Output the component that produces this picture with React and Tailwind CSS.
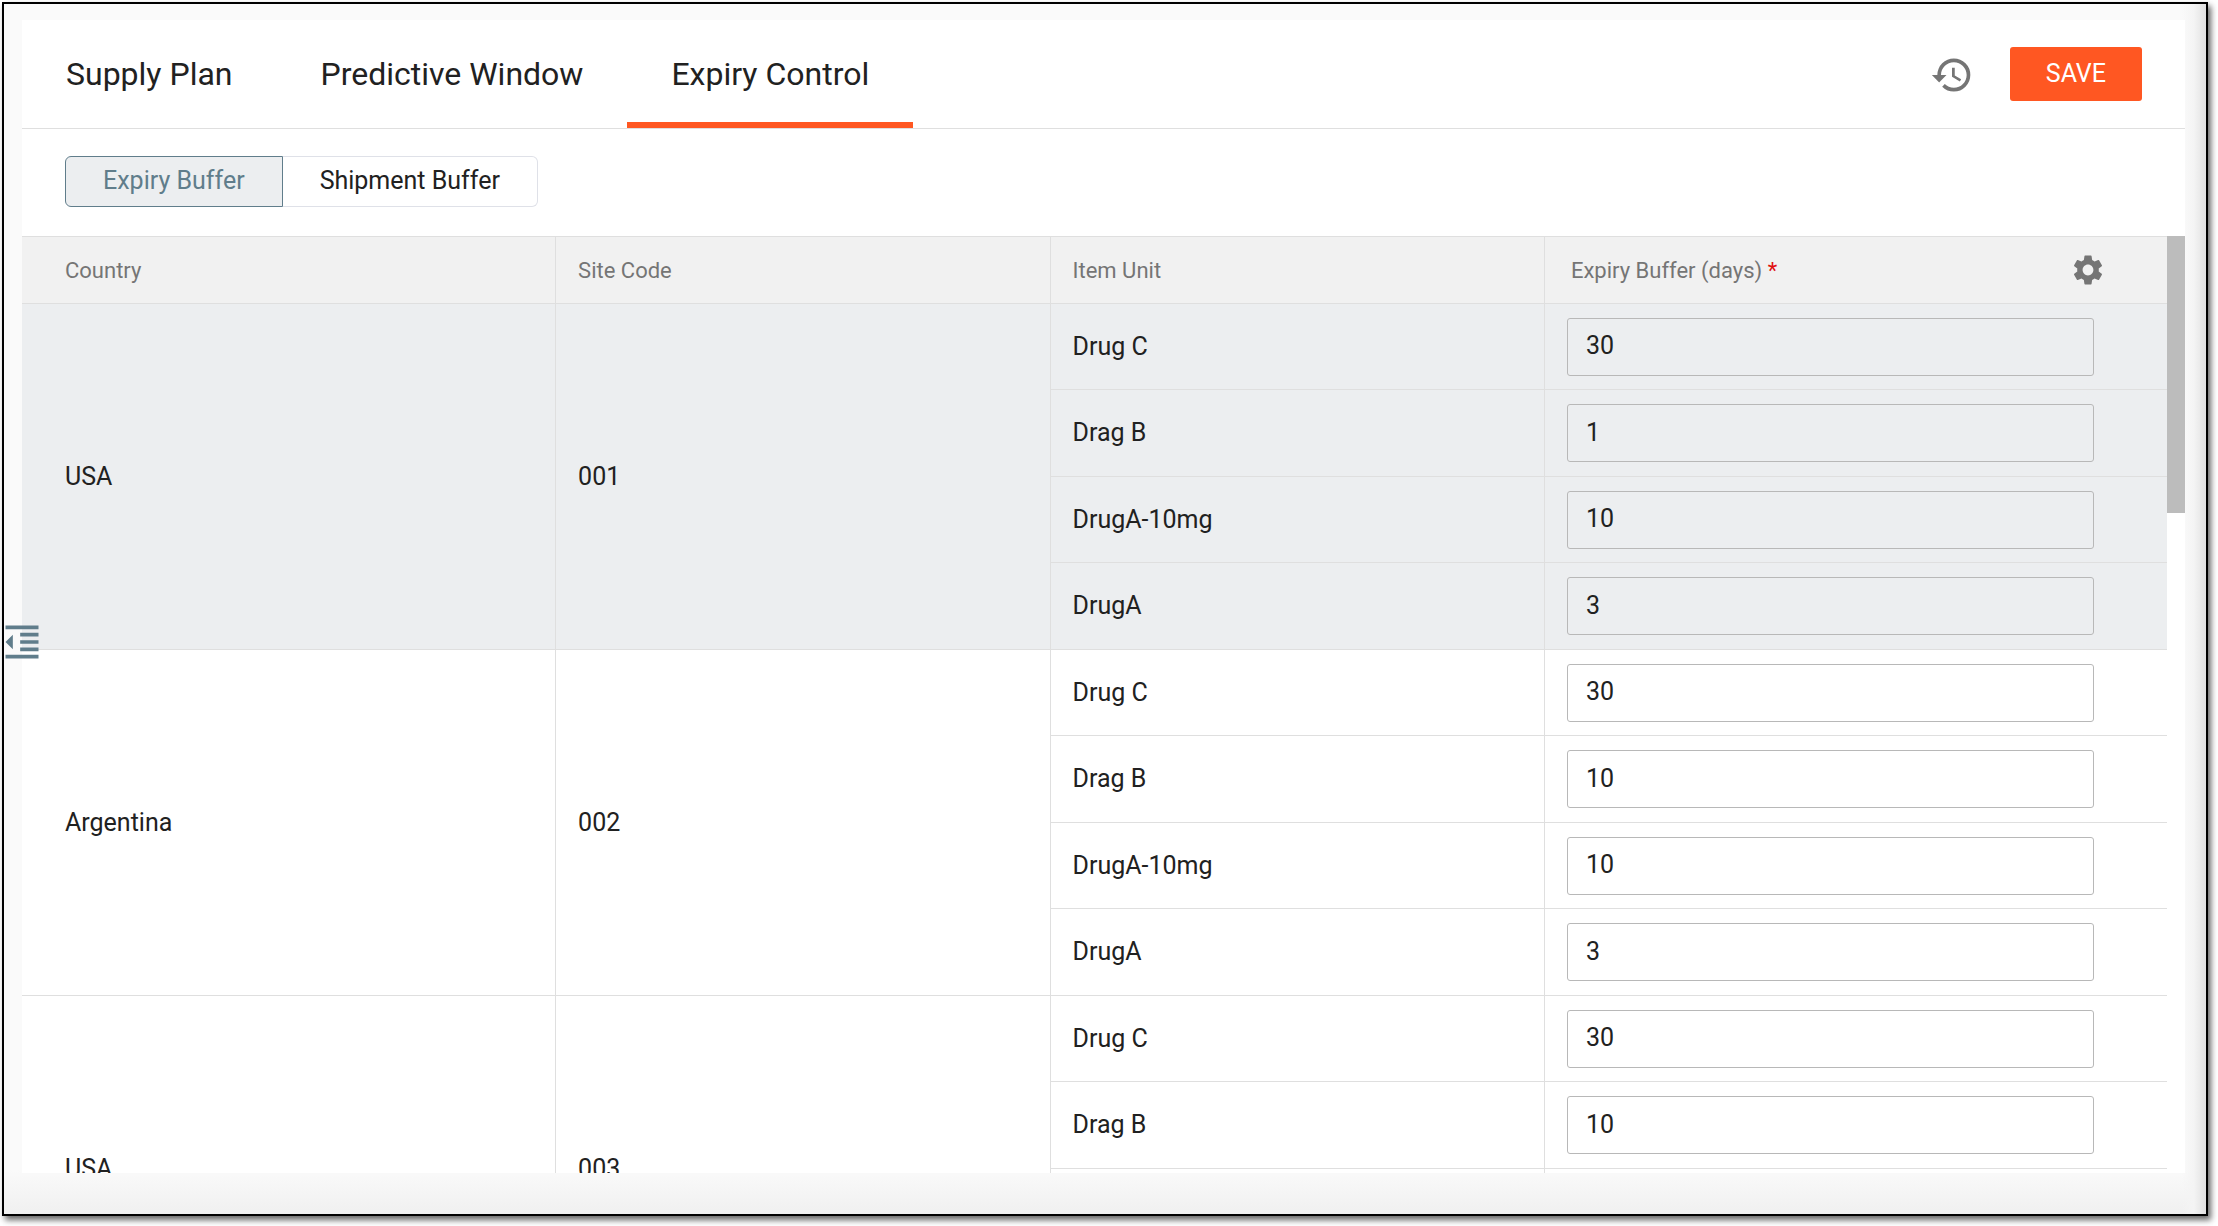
import React, { useState } from 'react';
import { MdHistory, MdSettings, MdFormatIndentDecrease } from 'react-icons/md';
import clsx from 'clsx';

const TABS = ['Supply Plan', 'Predictive Window', 'Expiry Control'];
const BUFFERS = ['Expiry Buffer', 'Shipment Buffer'];

const SITES = [
  {
    country: 'USA',
    code: '001',
    items: [['Drug C', 30], ['Drag B', 1], ['DrugA-10mg', 10], ['DrugA', 3]],
  },
  {
    country: 'Argentina',
    code: '002',
    items: [['Drug C', 30], ['Drag B', 10], ['DrugA-10mg', 10], ['DrugA', 3]],
  },
  {
    country: 'USA',
    code: '003',
    items: [['Drug C', 30], ['Drag B', 10], ['DrugA-10mg', 10], ['DrugA', 3]],
  },
];

const Header = () => {
  const [tab, setTab] = useState('Expiry Control');

  return (
    <header className="flex items-center justify-between border-b border-[#dfdfdf] pr-[43px]">
      <nav className="flex">
        {TABS.map((name) => (
          <button
            key={name}
            type="button"
            onClick={() => setTab(name)}
            className={clsx(
              'h-[108px] px-11 pt-1.5 border-b-6 text-[32px] leading-10',
              tab === name ? 'border-[#ff5722]' : 'border-transparent'
            )}
          >
            {name}
          </button>
        ))}
      </nav>
      <div className="flex items-center gap-9">
        <button type="button" aria-label="History" className="pt-0.5 text-[#757575]">
          <MdHistory size={44} />
        </button>
        <button type="button" className="h-[54px] px-9 rounded-[3px] bg-[#ff5722] text-white text-[25px]">
          SAVE
        </button>
      </div>
    </header>
  );
};

const BufferToggle = () => {
  const [buffer, setBuffer] = useState('Expiry Buffer');

  return (
    <div className="flex px-[43px] pt-[27px] pb-[29px]">
      {BUFFERS.map((name) => (
        <button
          key={name}
          type="button"
          onClick={() => setBuffer(name)}
          className={clsx(
            'h-[51px] px-[37px] pb-0.5 border text-[25px] leading-8 first:rounded-l-md last:rounded-r-md',
            buffer === name ? 'border-[#607d8b] bg-[#eceef0] text-[#607d8b]' : 'border-[#dfe1e8] border-l-0'
          )}
        >
          {name}
        </button>
      ))}
    </div>
  );
};

const BufferTable = () => (
  <table className="flex-1 table-fixed border-separate border-spacing-0 text-[25px]">
    <colgroup>
      <col className="w-[24.9%]" />
      <col className="w-[23.05%]" />
      <col className="w-[23.05%]" />
      <col className="w-[29%]" />
    </colgroup>
    <thead>
      <tr className="h-[68px] bg-[#f1f1f1] text-left text-[22px] text-[#757575] *:border-y *:border-[#dfdfdf] *:font-normal">
        <th className="border-r pl-[43px]">Country</th>
        <th className="border-r pl-[22px]">Site Code</th>
        <th className="border-r pl-[22px]">Item Unit</th>
        <th className="pl-[26px] pr-[61px]">
          <div className="flex items-center justify-between">
            <span>
              Expiry Buffer (days) <span className="text-[#e01010]">*</span>
            </span>
            <button type="button" aria-label="Settings">
              <MdSettings size={36} />
            </button>
          </div>
        </th>
      </tr>
    </thead>
    {SITES.map((site, index) => (
      <tbody key={site.code} className={index === 0 ? 'bg-[#eceef0]' : 'bg-white'}>
        {site.items.map(([item, days], i) => (
          <tr key={item} className="h-[86px] even:h-[87px] *:border-b *:border-[#dfdfdf]">
            {i === 0 && (
              <>
                <td rowSpan={site.items.length} className="border-r pl-[43px]">{site.country}</td>
                <td rowSpan={site.items.length} className="border-r pl-[22px]">{site.code}</td>
              </>
            )}
            <td className="border-r pl-[22px]">{item}</td>
            <td className="pl-[22px] pr-[73px]">
              <input
                type="text"
                defaultValue={days}
                aria-label={`Expiry buffer for ${item}, site ${site.code}`}
                className="block w-full h-[58px] px-[18px] pb-0.5 border border-[#b8b8b8] rounded-[3px] bg-transparent"
              />
            </td>
          </tr>
        ))}
      </tbody>
    ))}
  </table>
);

const App = () => (
  <div className="h-screen pt-0.5 pl-0.5 pr-2.5 pb-2.5 bg-white font-[Roboto,sans-serif] text-[#212121]">
    <div className="relative flex h-full border-2 border-black bg-[#fafafa] bg-[linear-gradient(to_left,#e0e0e0,#f4f4f4_12px,transparent_24px),linear-gradient(to_top,#f0f0f0,transparent_44px)] pt-4 pl-[18px] pr-[21px] pb-[41px] shadow-[3px_4px_6px_rgba(0,0,0,0.6)]">
      <main className="flex flex-1 flex-col overflow-hidden bg-white">
        <Header />
        <BufferToggle />
        <div className="flex min-h-0 flex-1 items-start overflow-hidden">
          <BufferTable />
          <div className="h-[277px] w-[18px] shrink-0 bg-[#bcbcbc]" />
        </div>
      </main>
      {/* side panel handle */}
      <button type="button" aria-label="Expand panel" className="absolute -left-1 top-[616px] text-[#607d8b]">
        <MdFormatIndentDecrease size={44} />
      </button>
    </div>
  </div>
);

export default App;
